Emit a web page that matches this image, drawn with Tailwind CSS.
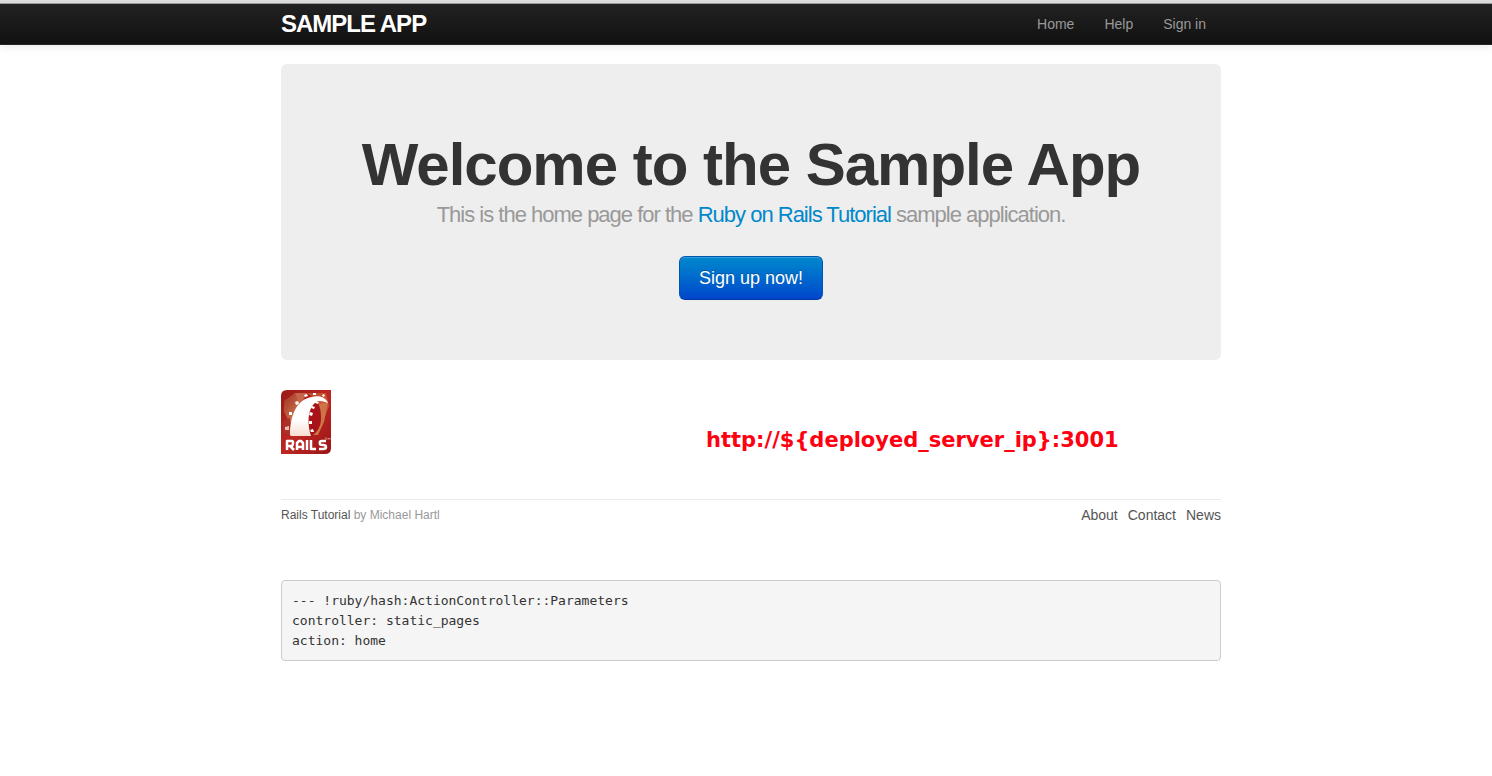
<!DOCTYPE html>
<html lang="en">
<head>
<meta charset="utf-8">
<meta name="viewport" content="width=device-width, initial-scale=1">
<title>Sample App</title>
<script src="https://cdn.jsdelivr.net/npm/@tailwindcss/browser@4"></script>
</head>
<body class="bg-white font-['Liberation_Sans',Arial,sans-serif] text-sm leading-5 text-[#333]">
<header class="border-t-3 border-[#dcdcdc] shadow-[0_1px_10px_rgba(0,0,0,0.1)]">
  <div class="border-t border-b border-t-[#999] border-b-[#252525] bg-linear-to-b from-[#222] to-[#111] pl-[10px]">
    <div class="mx-auto flex h-10 max-w-[940px] items-center justify-between">
      <a href="#" class="text-2xl leading-6 font-bold tracking-[-1px] text-white uppercase">Sample App</a>
      <nav class="flex gap-[30px] pr-[15px] text-[#999]">
        <a href="#">Home</a>
        <a href="#">Help</a>
        <a href="#">Sign in</a>
      </nav>
    </div>
  </div>
</header>
<div class="pl-[10px]">
<div class="mx-auto max-w-[940px] pt-[19px]">
  <main>
    <section class="flex flex-col items-center rounded-md bg-[#eee] px-[60px] pt-[71px] pb-[60px] text-center">
      <h1 class="text-[60px] leading-[60px] font-bold tracking-[-1px]">Welcome to the Sample App</h1>
      <h2 class="mt-2 text-[22px] leading-6 tracking-[-1px] text-[#999]">This is the home page for the <a href="#" class="text-[#08c]">Ruby on Rails Tutorial</a> sample application.</h2>
      <button type="button" class="mt-[29px] h-11 rounded-md border border-[#0055b3] border-b-[#003ba0] bg-linear-to-b from-[#08c] to-[#04c] px-[19px] text-lg leading-6 text-white shadow-[inset_0_1px_0_rgba(255,255,255,0.2)] [text-shadow:0_-1px_0_rgba(0,0,0,0.25)]">Sign up now!</button>
    </section>
    <div class="mt-[30px] flex items-end">
      <a href="#" aria-label="Rails">
        <svg width="50" height="64" viewBox="0 0 50 64" class="block">
          <defs>
            <linearGradient id="base" x1="0" y1="0" x2="1" y2="1"><stop offset="0" stop-color="#981a18"/><stop offset=".5" stop-color="#bd2723"/><stop offset="1" stop-color="#991416"/></linearGradient>
            <linearGradient id="glow" x1="0" y1="0" x2="1" y2="1"><stop offset="0" stop-color="#a43022"/><stop offset="1" stop-color="#dd9465"/></linearGradient>
            <linearGradient id="track" x1="0" y1="0" x2="0" y2="1"><stop offset=".6" stop-color="#fff"/><stop offset="1" stop-color="#f6ddd0"/></linearGradient>
          </defs>
          <path d="M6 0H50V58Q50 64 44 64H0V6Q0 0 6 0Z" fill="url(#base)"/>
          <path d="M3 11 14 3 26 3 18 17 9 33 3 22Z" fill="url(#glow)"/>
          <path d="M14 3 26 3 19 15Z" fill="#c7654a"/>
          <path d="M26 3H45L48 16 43 29 36 10Z" fill="#c6512f"/>
          <path d="M38 14 47 12 43 32 37 45 32 45 36 29Z" fill="#cd7548"/>
          <path d="M2 31 9 28 9 45 2 43Z" fill="#ad3028"/>
          <path d="M36 11C28 17 26 32 30 46C36 43 40 37 40 28C40 21 39 16 36 11Z" fill="#a81219"/>
          <path d="M9 45C9 25 16 9 31 7C39 5 45 8 47 13L44 12C42 11 39 11 37 11C28 15 25 29 30 46H10Z" fill="url(#track)"/>
          <g fill="#fff">
            <path d="m14 12 3-1 1 3-3 1zM8 22l3 0 0 3-3 0zM23 5l3-1 1 2-3 1zM32 3l3 0 0 2-3 0zM42 4l2 1-1 2-2-1z"/>
            <path d="m4 37 4-1 0 4-4 0z" fill="#e8bdb5"/>
            <path d="m35 11 3 1-1 2-3-1zM31 16l3 1-1 2-3-1zM29 22l3 1-1 3-3-1zM28 31l3 0 0 3-3 0zM29 40l3-1 1 3-3 0z"/>
          </g>
          <g fill="none" stroke="#fff" stroke-width="2.5" stroke-linejoin="round">
            <path d="M6 60V51H11Q12 51 12 53T11 56H6M9 56 13 60M16 60V53L18 51H20L22 53V60M16 57H22M26 50V60M30 50V59H35M45 51H41Q38 51 39 54Q39 55 42 55Q45 55 45 57Q45 59 42 59H38"/>
          </g>
          <path d="M44 48H46M45 48V50M47 50V48L48 49 49 48V50" fill="none" stroke="#edc9c3" stroke-width=".5"/>
        </svg>
      </a>
      <p class="ml-[375px] font-['DejaVu_Sans',sans-serif] text-[21px] leading-7 font-bold text-[#ff0010]">http://${deployed_server_ip}:3001</p>
    </div>
  </main>
  <footer class="mt-[45px] flex items-center justify-between border-t border-[#eaeaea] pt-[5px] text-[#999]">
    <small class="text-xs leading-5"><a href="#" class="text-[#555]">Rails Tutorial</a> by Michael Hartl</small>
    <nav class="flex gap-[10px] text-[#555]">
      <a href="#">About</a>
      <a href="#">Contact</a>
      <a href="#">News</a>
    </nav>
  </footer>
  <pre class="mt-[55px] rounded-sm border border-[#ccc] bg-[#f5f5f5] px-[10px] pt-[10px] pb-[9px] font-['DejaVu_Sans_Mono',monospace] text-[13px] leading-5">--- !ruby/hash:ActionController::Parameters
controller: static_pages
action: home
</pre>
</div>
</div>
</body>
</html>
